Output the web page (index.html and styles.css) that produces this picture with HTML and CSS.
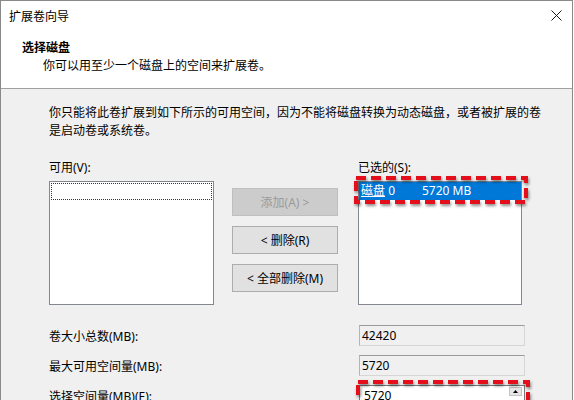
FILE: index.html
```html
<!DOCTYPE html>
<html lang="zh-CN">

<head>
  <meta charset="UTF-8">
  <meta name="viewport" content="width=device-width, initial-scale=1.0">
  <title>扩展卷向导</title>
  <link rel="stylesheet" href="styles.css">
</head>

<body>
  <div class="window">
    <div class="top">
      <div class="titlebar">
        <span class="title">扩展卷向导</span>
        <svg class="close" viewBox="0 0 11 11"><path d="M0.5 0.5L10.5 10.5M10.5 0.5L0.5 10.5" /></svg>
      </div>
      <div class="page-head">
        <div class="page-title">选择磁盘</div>
        <div class="page-desc">你可以用至少一个磁盘上的空间来扩展卷。</div>
      </div>
    </div>

    <div class="body">
      <p class="note">你只能将此卷扩展到如下所示的可用空间，因为不能将磁盘转换为动态磁盘，或者被扩展的卷<br>是启动卷或系统卷。</p>

      <div class="picker">
        <div class="col">
          <label>可用(V):</label>
          <div class="listbox">
            <div class="focus-row"></div>
          </div>
        </div>

        <div class="buttons">
          <button disabled>添加(A) &gt;</button>
          <button>&lt; 删除(R)</button>
          <button>&lt; 全部删除(M)</button>
        </div>

        <div class="col">
          <label>已选的(S):</label>
          <div class="listbox">
            <div class="item selected">
              <span class="disk"><u>磁盘</u> 0</span>
              <span>5720 MB</span>
            </div>
            <!-- red annotation frame -->
            <svg class="mark" viewBox="0 0 174 28"><rect x="2" y="2" width="170" height="24" /></svg>
          </div>
        </div>
      </div>

      <div class="fields">
        <span class="field-label">卷大小总数(MB):</span>
        <div class="field readonly">42420</div>

        <span class="field-label">最大可用空间量(MB):</span>
        <div class="field readonly">5720</div>

        <span class="field-label">选择空间量(MB)(E):</span>
        <div class="field spin">
          5720
          <div class="spin-btn"><svg viewBox="0 0 5 3"><path d="M0 3L2.5 0L5 3Z" /></svg></div>
          <svg class="mark" viewBox="0 0 174 28"><rect x="2" y="2" width="170" height="24" /></svg>
        </div>
      </div>
    </div>
  </div>
</body>

</html>
```

FILE: styles.css
```css
html,
body {
  margin: 0;
  height: 400px;
  overflow: hidden;
  background-color: #fff;
}

body {
  font-family: "Noto Sans", "Noto Sans CJK SC", sans-serif;
  font-size: 12px;
  color: #000;
}

.window {
  width: 571px;
  height: 400px;
  border: 1px solid #8a8a8a;
  border-bottom: none;
  background-color: #f0f0f0;
  overflow: hidden;
}

.top {
  background-color: #fff;
  border-bottom: 1px solid #a0a0a0;
  padding-bottom: 13px;
}

.titlebar {
  height: 29px;
  display: flex;
  align-items: center;
  justify-content: space-between;
  padding: 0 10px 0 8px;
}

.close {
  width: 11px;
  height: 11px;
}

.close path {
  stroke: #1a1a1a;
  stroke-width: 1;
  fill: none;
}

.page-head {
  padding: 9px 0 0 21px;
  line-height: 18px;
}

.page-title {
  font-weight: bold;
}

.page-desc {
  padding-left: 21px;
}

.body {
  padding-left: 48px;
  position: relative;
}

.note {
  margin: 15px 0 0;
  line-height: 18px;
  white-space: nowrap;
}

.picker {
  display: grid;
  grid-template-columns: 165px 106px 166px;
  column-gap: 18px;
  margin-top: 19px;
}

.picker .col:last-child {
  margin-left: 2px;
}

.col label {
  display: block;
  line-height: 18px;
  margin-bottom: 4px;
}

.listbox {
  position: relative;
  box-sizing: border-box;
  height: 124px;
  background-color: #fff;
  border: 1px solid #828790;
}

.focus-row {
  margin: 1px;
  height: 15px;
  border: 1px dotted #333;
}

.item {
  height: 18px;
  line-height: 18px;
  display: flex;
  padding-left: 2px;
}

.item.selected {
  background-color: #0078d7;
  color: #fff;
}

.disk {
  width: 61px;
}

.buttons {
  display: flex;
  flex-direction: column;
  gap: 10px;
  padding-top: 29px;
}

.buttons button {
  height: 28px;
  font-family: inherit;
  font-size: 12px;
  background-color: #e1e1e1;
  border: 1px solid #adadad;
  color: #000;
  padding: 0;
}

.buttons button:disabled {
  background-color: #cccccc;
  border-color: #bfbfbf;
  color: #9a9a9a;
}

.mark {
  position: absolute;
  left: -5px;
  top: -6px;
  width: 174px;
  height: 28px;
  overflow: visible;
  filter: drop-shadow(1px 2px 1.5px rgba(0, 0, 0, 0.45));
}

.mark rect {
  fill: none;
  stroke: #e3101b;
  stroke-width: 4;
  stroke-dasharray: 10 5;
}

.fields {
  display: grid;
  grid-template-columns: 310px 166px;
  row-gap: 9px;
  align-items: center;
  margin-top: 20px;
}

.field {
  position: relative;
  box-sizing: border-box;
  height: 21px;
  line-height: 19px;
  padding-left: 2px;
  border: 1px solid #d6d6d6;
}

.field.readonly {
  background-color: #f0f0f0;
  border-top-color: #9a9a9a;
  border-left-color: #b4b4b4;
}

.field.spin {
  background-color: #fff;
  border-color: #7a7a7a;
  padding-left: 4px;
}

.field.spin .mark {
  left: -4px;
  top: -6px;
}

.spin-btn {
  position: absolute;
  right: 2px;
  top: 1px;
  width: 13px;
  height: 9px;
  background-color: #e6e6e6;
  border: 1px solid #c4c4c4;
  box-sizing: border-box;
  display: flex;
  align-items: center;
  justify-content: center;
}

.spin-btn svg {
  width: 5px;
  height: 3px;
}
```
